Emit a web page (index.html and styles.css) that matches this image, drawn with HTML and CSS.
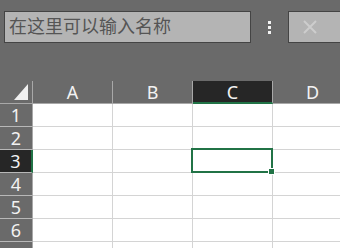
FILE: index.html
```html
<!DOCTYPE html>
<html lang="zh">
<head>
    <meta charset="UTF-8">
    <title>Sheet</title>
    <link rel="stylesheet" href="styles.css">
</head>
<body>

<div class="toolbar">
    <div class="name-box">在这里可以输入名称</div>
    <div class="more">
        <span></span><span></span><span></span>
    </div>
    <div class="close-btn">
        <svg width="16" height="14" viewBox="0 0 16 14">
            <path d="M2 1 L14 13 M14 1 L2 13" stroke="#cdcdcd" stroke-width="2" fill="none"/>
        </svg>
    </div>
</div>

<div class="sheet">
    <div class="corner"><div class="tri"></div></div>
    <div class="col-head">A</div>
    <div class="col-head">B</div>
    <div class="col-head active">C</div>
    <div class="col-head">D</div>

    <div class="row-head">1</div>
    <div class="cell"></div><div class="cell"></div><div class="cell"></div><div class="cell"></div>
    <div class="row-head">2</div>
    <div class="cell"></div><div class="cell"></div><div class="cell"></div><div class="cell"></div>
    <div class="row-head active">3</div>
    <div class="cell"></div><div class="cell"></div><div class="cell selected"><span class="handle"></span></div><div class="cell"></div>
    <div class="row-head">4</div>
    <div class="cell"></div><div class="cell"></div><div class="cell"></div><div class="cell"></div>
    <div class="row-head">5</div>
    <div class="cell"></div><div class="cell"></div><div class="cell"></div><div class="cell"></div>
    <div class="row-head">6</div>
    <div class="cell"></div><div class="cell"></div><div class="cell"></div><div class="cell"></div>
    <div class="row-head"></div>
    <div class="cell"></div><div class="cell"></div><div class="cell"></div><div class="cell"></div>
</div>

</body>
</html>
```

FILE: styles.css
```css
body {
    margin: 0;
    background-color: #6a6a6a;
    font-family: "Noto Sans", "Noto Sans CJK SC", sans-serif;
    width: 340px;
    height: 248px;
    overflow: hidden;
}

.toolbar {
    display: flex;
    align-items: center;
    padding: 11px 0 0 4px;
    height: 32px;
}

.name-box {
    box-sizing: border-box;
    flex-shrink: 0;
    width: 247px;
    height: 32px;
    background-color: #b4b4b4;
    border: 1px solid #444;
    padding: 0 0 2px 4px;
    font-family: "Noto Sans CJK SC", sans-serif;
    font-size: 18px;
    line-height: 27px;
    color: #555;
    white-space: nowrap;
}

.more {
    display: flex;
    flex-direction: column;
    gap: 2px;
    flex-shrink: 0;
    margin-left: 17px;
}

.more span {
    display: block;
    width: 3px;
    height: 3px;
    background-color: #f2f2f2;
}

.close-btn {
    box-sizing: border-box;
    flex-shrink: 0;
    width: 60px;
    height: 32px;
    margin-left: 17px;
    background-color: #b4b4b4;
    border: 1px solid #444;
    display: flex;
    align-items: center;
    padding-left: 13px;
}

.close-btn svg {
    filter: blur(0.4px);
}

.sheet {
    margin-top: 38px;
    display: grid;
    grid-template-columns: 33px repeat(4, 80px);
    grid-template-rows: 23px repeat(7, 23px);
}

.corner {
    box-sizing: border-box;
    border-right: 1px solid #a8a8a8;
    border-bottom: 1px solid #a8a8a8;
    position: relative;
}

.corner .tri {
    position: absolute;
    right: 4px;
    bottom: 3px;
    width: 0;
    height: 0;
    border-left: 14px solid transparent;
    border-bottom: 16px solid #f0f0f0;
}

.col-head {
    box-sizing: border-box;
    border-right: 1px solid #a8a8a8;
    border-bottom: 1px solid #a8a8a8;
    color: #f2f2f2;
    font-size: 18px;
    line-height: 22px;
    text-align: center;
}

.col-head.active {
    background-color: #262626;
    border-bottom: 2px solid #217346;
}

.row-head {
    box-sizing: border-box;
    border-right: 1px solid #a8a8a8;
    border-bottom: 1px solid #b8b8b8;
    color: #f2f2f2;
    font-size: 18px;
    line-height: 22px;
    text-align: center;
}

.row-head.active {
    background-color: #262626;
    border-right: 2px solid #217346;
}

.cell {
    box-sizing: border-box;
    background-color: #fff;
    border-right: 1px solid #d4d4d4;
    border-bottom: 1px solid #d4d4d4;
    position: relative;
}

.cell.selected::after {
    content: "";
    position: absolute;
    top: -2px;
    left: -2px;
    right: -1px;
    bottom: -1px;
    border: 2px solid #217346;
}

.handle {
    position: absolute;
    right: -3px;
    bottom: -3px;
    width: 5px;
    height: 5px;
    background-color: #217346;
    border: 1px solid #fff;
    z-index: 1;
}
```
